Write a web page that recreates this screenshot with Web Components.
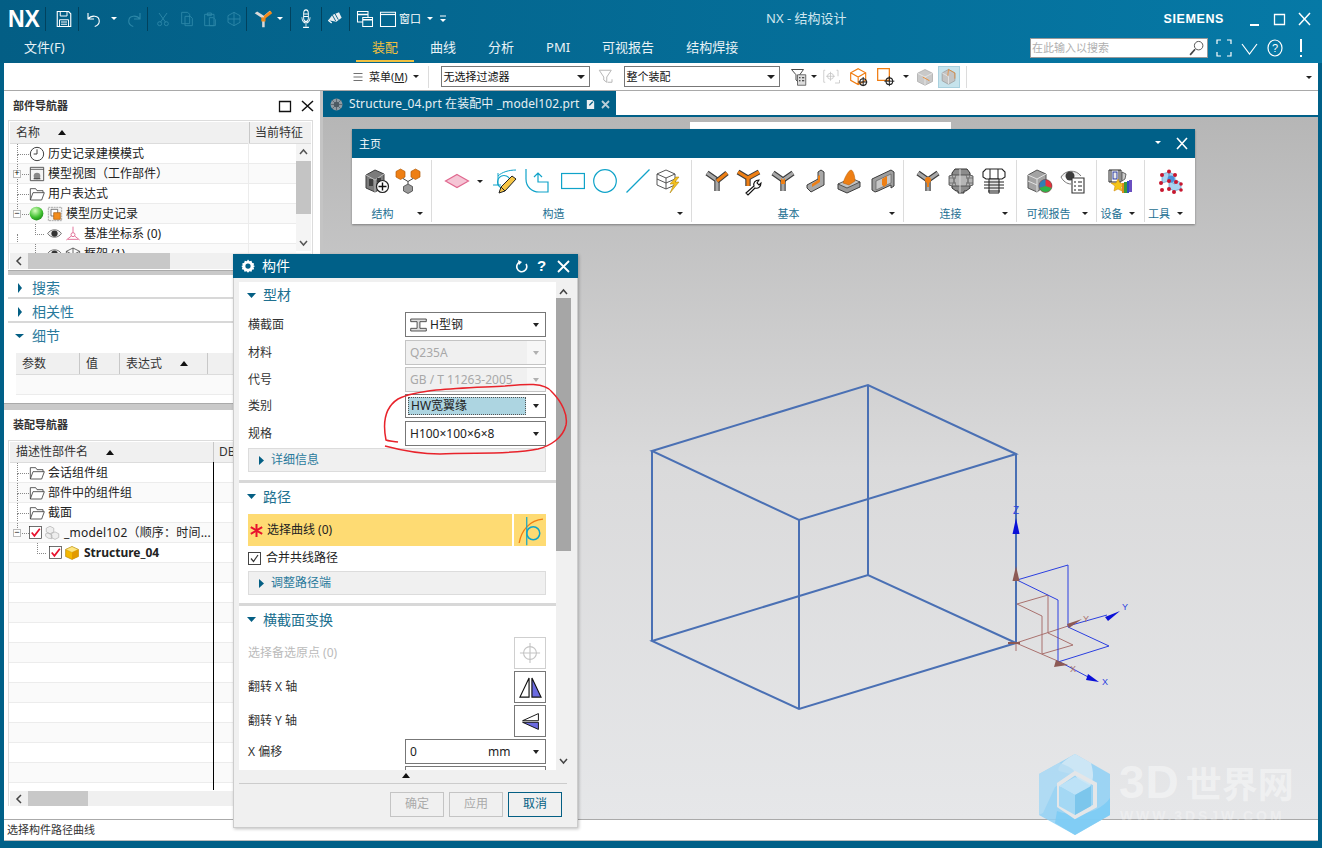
<!DOCTYPE html>
<html lang="zh">
<head>
<meta charset="utf-8">
<title>NX - 结构设计</title>
<style>
  html, body { margin: 0; padding: 0; background: #fff; }
  body { font: 12px/16px "Noto Sans", "Noto Sans CJK SC", sans-serif; color: #222; }
</style>
</head>
<body>
<nx-window></nx-window>
<script>
// steel section drawn as a dark outline with a lighter core
const beam = (d, c = "#a8a8a8") => `<path d="${d}" fill="none" stroke="#3c3c3c" stroke-width="5.400" stroke-linejoin="round"/><path d="${d}" fill="none" stroke="${c}" stroke-width="3.200" stroke-linejoin="round"/>`;

// small icon set, all drawn on a 24x24 box
const ICONS = {
  save: `<path d="M3 2h15l3 3v17H3z" fill="none" stroke="#fff" stroke-width="1.5"/><path d="M7 2v6h9V2M6 22v-9h12v9M8 16h8M8 19h8" fill="none" stroke="#fff" stroke-width="1.3"/>`,
  undo: `<path d="M4 4v8h8M4 12c4-5 15-6 15 3 0 4-3 6-6 7" fill="none" stroke="#fff" stroke-width="1.5"/>`,
  redo: `<path d="M20 4v8h-8M20 12c-4-5-15-6-15 3 0 4 3 6 6 7" fill="none" stroke="#2c87a8" stroke-width="1.5"/>`,
  cut: `<circle cx="7" cy="19" r="3" fill="none" stroke="#2c87a8" stroke-width="1.4"/><circle cx="17" cy="19" r="3" fill="none" stroke="#2c87a8" stroke-width="1.4"/><path d="M8 17L18 3M16 17L6 3" stroke="#2c87a8" stroke-width="1.4"/>`,
  copy: `<path d="M4 2h9l3 3v14H4zM9 8h8l3 3v11H9z" fill="none" stroke="#2c87a8" stroke-width="1.4"/>`,
  paste: `<path d="M4 5h14v17H4zM8 3h6v4H8zM11 10h6l3 3v9h-9z" fill="none" stroke="#2c87a8" stroke-width="1.4"/>`,
  del: `<path d="M12 2l9 5v10l-9 5-9-5V7zM3 12h18M12 2v20" fill="none" stroke="#2c87a8" stroke-width="1.4"/>`,
  yTop: `<path d="M2 5l9 6v11h3V11l8-7-2-2-7 6-8-5z" fill="#d9d9d9"/><path d="M13 8l8-6 2 3-9 7z" fill="#f08a1c"/><path d="M10 10h5v5h-5z" fill="#f08a1c"/>`,
  mic: `<rect x="8" y="1" width="8" height="14" rx="4" fill="none" stroke="#fff" stroke-width="1.5"/><path d="M8 6h8M8 9h8M5 10c0 9 14 9 14 0M12 18v3M7 22h10" fill="none" stroke="#fff" stroke-width="1.4"/>`,
  hand: `<path d="M2 14l6-8 10-4 4 8-8 6z" fill="#e8edf0"/><path d="M8 6l5 9M12 4l5 9" stroke="#045f84" stroke-width="1.4"/><path d="M2 14l5 4" stroke="#fff" stroke-width="2"/>`,
  winStack: `<path d="M2 2h14v14H2z" fill="none" stroke="#fff" stroke-width="1.4"/><path d="M2 6h14" stroke="#fff" stroke-width="2"/><path d="M9 10h13v12H9z" fill="#04688f" stroke="#fff" stroke-width="1.4"/><path d="M9 13h13" stroke="#fff" stroke-width="2"/>`,
  win: `<path d="M2 3h20v19H2z" fill="none" stroke="#fff" stroke-width="1.4"/><path d="M2 6h20" stroke="#fff" stroke-width="1.6"/>`,
  search: `<circle cx="15" cy="8" r="6" fill="#fff" stroke="#555" stroke-width="1.4"/><path d="M10 13l-7 8" stroke="#444" stroke-width="2.4"/>`,
  menu: `<path d="M3 5h18M3 12h18M3 19h18" stroke="#333" stroke-width="1.4"/>`,
  filterUndo: `<path d="M3 3h16l-6 9v7l-4-3v-4z" fill="none" stroke="#b5b5b5" stroke-width="1.3"/><path d="M14 19h6v-4" fill="none" stroke="#b5b5b5" stroke-width="1.3"/>`,
  filterList: `<path d="M2 2h16l-5 7v11l-5-4V9z" fill="#fff" stroke="#444" stroke-width="1.3"/><path d="M10 9h11v14H10z" fill="#ddd" stroke="#444"/><path d="M12 13h2M16 13h3M12 17h2M16 17h3" stroke="#222" stroke-width="1.4"/>`,
  snapGray: `<path d="M3 3H1v16h2M18 3h2v8" fill="none" stroke="#c0c0c0"/><circle cx="10" cy="11" r="4" fill="none" stroke="#c0c0c0"/><path d="M10 5v12M4 11h12M16 20h6v-4" fill="none" stroke="#c0c0c0"/>`,
  cubeTarget: `<path d="M11 2l9 5v9l-9 5-9-5V7zM2 7l9 5 9-5M11 12v9" fill="#fff" stroke="#f07d12" stroke-width="1.4"/><circle cx="17" cy="18" r="4" fill="none" stroke="#222" stroke-width="1.3"/><path d="M17 12v11M11 18h11" stroke="#222" stroke-width="1.2"/>`,
  rectTarget: `<path d="M2 2h14v14H2z" fill="#fff" stroke="#f07d12" stroke-width="1.5"/><circle cx="16" cy="17" r="4" fill="none" stroke="#222" stroke-width="1.3"/><path d="M16 11v12M10 17h12" stroke="#222" stroke-width="1.2"/>`,
  cubeA: `<path d="M12 2l10 5v11l-10 5L2 18V7z" fill="#c9c9c9" stroke="#aaa"/><path d="M2 7l10 5 10-5M12 12v11" fill="none" stroke="#eee"/><path d="M9 12l9 5" stroke="#f07d12" stroke-width="1"/>`,
  cubeB: `<path d="M12 2l9 5v11l-9 5-9-5V7z" fill="#c4c4c4" stroke="#999"/><path d="M3 7l9 5v11" fill="none" stroke="#eee"/><path d="M12 2l9 5v8" fill="none" stroke="#f07d12" stroke-width=".9"/><path d="M12 2l-1 9" stroke="#f07d12" stroke-width=".9"/>`,
  wheelAdd: `<path d="M1 6l9-5 9 4v13l-9 5-9-4z" fill="#7b7b7b" stroke="#3c3c3c"/><path d="M1 6l9 5 9-6M10 11v12" fill="none" stroke="#bdbdbd"/><rect x="4" y="10" width="4" height="7" fill="#3f3f3f"/><rect x="12" y="9" width="4" height="4" fill="#3f3f3f"/><circle cx="17.500" cy="17.500" r="6" fill="#fff" stroke="#222" stroke-width="1.200"/><path d="M17.500 13.500v8M13.500 17.500h8" stroke="#111" stroke-width="1.400"/>`,
  linkOrange: `<path d="M4.500 0L9 2.500V8L4.500 10.500 0 8V2.500z" fill="#ee7f14" stroke="#b25c08" stroke-width=".7"/><path d="M19.500 0L24 2.500V8l-4.500 2.500L15 8V2.500z" fill="#ee7f14" stroke="#b25c08" stroke-width=".7"/><path d="M12 15l4.500 2.500V22L12 24.500 7.500 22v-4.500z" fill="#9a9a9a" stroke="#444" stroke-width=".8"/><path d="M7 9.500l5 3 5-3M12 12.500V15" fill="none" stroke="#444"/>`,
  plane: `<path d="M12 5.500l11.500 6.500L12 18.500.500 12z" fill="#f5c5d5" stroke="#e0688f" stroke-width="1.200"/>`,
  sketch: `<path d="M0 16h8M5 4v12M5 7C9 3 16 1 23 1" fill="none" stroke="#10a3c9" stroke-width="1"/><circle cx="11" cy="13" r="6.500" fill="none" stroke="#10a3c9" stroke-width="1.100"/><path d="M19 7l4 3-11 12-6 2 2-6z" fill="#f6c545" stroke="#222" stroke-width="1"/><path d="M8 18l4 4" stroke="#222"/>`,
  curve: `<path d="M1 0v10c0 8 6 13 13 13h9V13h-10V4M9 8l4-4 4 4" fill="none" stroke="#10a3c9" stroke-width="1.200"/>`,
  rect: `<rect x=".600" y="4.500" width="22.800" height="15" fill="none" stroke="#10a3c9" stroke-width="1.200"/>`,
  circle: `<circle cx="12" cy="12" r="11.300" fill="none" stroke="#10a3c9" stroke-width="1.200"/>`,
  line: `<path d="M.500 23.500L23.500.500" stroke="#10a3c9" stroke-width="1.200"/>`,
  boxBolt: `<path d="M9 1l9 4v11l-9 4-9-4V5zM0 5l9 4 9-4M9 9v11M0 10l9 4 9-4" fill="none" stroke="#444" stroke-width=".900"/><path d="M19 8l-6 7h4l-4 9 9-11h-4l4-5z" fill="#f4c020" stroke="#a67c00" stroke-width=".5"/>`,
  yOrange: beam("M2 4l10 7v11") + beam("M12 12l10-8", "#ee7f14"),
  yWrench: beam("M1 3l10 6 11-6", "#ee7f14") + beam("M11 10v7", "#ee7f14") + `<path d="M9 24l8-7c-1-3 1-6 5-6l-2 3 2 2 2-2c0 4-3 6-6 5l-7 7z" fill="#fff" stroke="#111" stroke-width="1.100"/>`,
  yMid: beam("M2 4l10 7 10-7") + beam("M12 11v11") + `<path d="M10 9l2 2 2-2v6h-4z" fill="#ee7f14"/>`,
  lBracket: `<path d="M3 19v-3l11-6V3l3-2 3 2v13L7 23z" fill="#a8a8a8" stroke="#3c3c3c" stroke-width="1"/><path d="M8 15l6-4V7l2-1v7l-8 5z" fill="#ee7f14"/>`,
  gusset: `<path d="M1 15v5l9 4 13-6v-5z" fill="#9a9a9a" stroke="#3c3c3c" stroke-width="1"/><path d="M1 15l13-6 9 4-13 6z" fill="#c2c2c2" stroke="#3c3c3c" stroke-width=".8"/><path d="M6 14c2-6 5-12 8-13 2 0 4 6 4 11l-6 4z" fill="#ee7f14" stroke="#b25c08" stroke-width=".5"/>`,
  channel: `<path d="M1 10L20 1l3 2v14l-3 2v-3L7 22l-3 1-3-2z" fill="#9e9e9e" stroke="#3c3c3c" stroke-width="1"/><path d="M5 12L20 5v9L5 21z" fill="#c8c8c8" stroke="#555" stroke-width=".6"/><path d="M11 10l5-3v8l-2.500 3-2.500-2z" fill="#ee7f14"/>`,
  yBolt: beam("M2 4l10 7 10-7") + beam("M12 11v11") + `<circle cx="12" cy="11" r="3" fill="#ee7f14"/><path d="M11 13h2v5h-2z" fill="#ee7f14"/>`,
  nut: `<path d="M6 0h12l3 4v15l-4 3h-2v2H9v-2H7l-4-3V4z" fill="#8c8c8c" stroke="#333" stroke-width="1"/><path d="M0 7l3-1h18l3 1v9l-3 1H3l-3-1z" fill="#b5b5b5" stroke="#444" stroke-width=".8"/><path d="M3 6l4 11M7 6L3 17M21 6l-4 11M17 6l4 11M0 9h7M0 14h7M17 9h7M17 14h7" stroke="#555" stroke-width=".6"/><path d="M11 0v24" stroke="#d8d8d8"/>`,
  bolt: `<path d="M4 0h16l3 3v5l-3 2H4L1 8V3z" fill="#fff" stroke="#222" stroke-width="1.100"/><path d="M8 0v10M16 0v10M7 10h10v14H7z" fill="#e6e6e6" stroke="#222" stroke-width="1"/><path d="M2 13h20M2 16h20M2 19h20M6 22h12" stroke="#222" stroke-width="1.100"/>`,
  report: `<path d="M9 1l9 4v11l-9 7-9-4V6z" fill="#a3a3a3" stroke="#555"/><path d="M0 6l9 4 9-5M9 10v13M0 12l9 4" fill="none" stroke="#e2e2e2"/><circle cx="17.500" cy="17" r="6.500" fill="#e6323c" stroke="#333" stroke-width=".5"/><path d="M17.500 17V10.500a6.500 6.500 0 0 0-6 8.500z" fill="#2f7fb5"/><path d="M17.500 17l-6 2a6.500 6.500 0 0 0 12 0z" fill="#2cb34a"/>`,
  eyeList: `<path d="M0 8C4 1 15 0 20 7" fill="#eee" stroke="#777"/><path d="M0 8c2 4 6 7 10 7" fill="none" stroke="#777"/><circle cx="9" cy="7" r="4.500" fill="#3c3c3c"/><path d="M11 9h12v15H11z" fill="#fff" stroke="#333" stroke-width="1.100"/><path d="M13 13h2M17 13h4M13 17h2M17 17h4M13 21h2M17 21h4" stroke="#222" stroke-width="1.100"/>`,
  device: `<path d="M0 1h12v12H0z" fill="#fff" stroke="#222"/><path d="M2 1v12M10 1v12" stroke="#222"/><rect x="4" y="3" width="4" height="7" fill="#e8e8e8" stroke="#2a3aa0"/><path d="M13 3l4 2-1 5-3 2z" fill="#ccc" stroke="#333" stroke-width=".7"/><path d="M5 22l1-5-4-3 5 0 2-4 2 4 4 1-3 3 1 4-4-2z" fill="#f5c518" stroke="#c88000" stroke-width=".5"/><path d="M13 14h2v10h-2z" fill="#e08a1e"/><path d="M15 13h3v11h-3z" fill="#3a9c3a"/><path d="M18 12h2v12h-2z" fill="#3050c0"/><path d="M20 11h3v12h-3z" fill="#6a4fc0"/>`,
  molecule: `<path d="M4 5l7-2v9l-7 2zM11 3l6 3v9l-6-3zM11 12l7-1 5 3v6l-7 2-5-3z" fill="#a9d3ef" stroke="#5590c0" stroke-width=".6"/><circle cx="13" cy="10" r="3.500" fill="#4a90d9"/><g fill="#c8172f"><circle cx="4" cy="6" r="2"/><circle cx="11" cy="2.500" r="2"/><circle cx="17" cy="6" r="2"/><circle cx="3" cy="14" r="2"/><circle cx="11" cy="12" r="2"/><circle cx="18" cy="13" r="2"/><circle cx="23" cy="15" r="1.800"/><circle cx="4" cy="21" r="2"/><circle cx="11" cy="20" r="2"/><circle cx="16" cy="23" r="2"/><circle cx="23" cy="21" r="1.800"/></g>`,
  clock: `<circle cx="12" cy="12" r="10" fill="#fff" stroke="#333" stroke-width="1.4"/><path d="M12 5v7H7" fill="none" stroke="#333" stroke-width="1.4"/>`,
  modelView: `<path d="M2 2h20v20H2z" fill="#f4f4f4" stroke="#444" stroke-width="1.3"/><path d="M2 5h20" stroke="#444" stroke-width="1.2"/><circle cx="12" cy="15" r="5" fill="#888"/><path d="M7 19h10" stroke="#555" stroke-width="2"/>`,
  folder: `<path d="M2 21V4h8l2 3h9v3M2 21l4-11h17l-4 11z" fill="#fff" stroke="#444" stroke-width="1.3"/>`,
  ball: `<defs><radialGradient id="b" cx=".4" cy=".3" r=".8"><stop offset="0" stop-color="#d8ffc0"/><stop offset=".6" stop-color="#40c030"/><stop offset="1" stop-color="#157a15"/></radialGradient></defs><circle cx="12" cy="12" r="11" fill="url(#b)"/>`,
  history: `<path d="M2 2h20v20H2z" fill="#f2f2f2" stroke="#888" stroke-dasharray="3 1"/><path d="M6 5h10v10H6z" fill="#fff" stroke="#444"/><path d="M10 10h10v10H10z" fill="#f28c1c" stroke="#a85a08"/>`,
  eye: `<path d="M1 12c5-8 17-8 22 0-5 8-17 8-22 0z" fill="#eee" stroke="#333"/><circle cx="12" cy="12" r="5" fill="#333"/>`,
  csys: `<circle cx="12" cy="13" r="3" fill="none" stroke="#e06c94" stroke-width="1.4"/><path d="M12 1v9M9.500 15L2 21M14.500 15L22 21M4 20h16" stroke="#e06c94" stroke-width="1.4" fill="none"/>`,
  frame: `<path d="M12 3l10 5v9l-10 5-10-5V8zM2 8l10 5 10-5M12 3v19" fill="none" stroke="#444" stroke-width="1.2"/>`,
  redCheck: `<rect x="1" y="1" width="22" height="22" fill="#fff" stroke="#222" stroke-width="1.2"/><path d="M5 12l5 6L20 5" fill="none" stroke="#e8112d" stroke-width="3.2"/>`,
  parts: `<path d="M8 2l6 3v6l-6 3-6-3V5zM16 11l6 3v6l-6 3-6-3v-6zM5 13l6 3v6l-6-1-4-3v-4z" fill="#eee" stroke="#aaa"/>`,
  goldCube: `<path d="M12 1l11 5v12l-11 5-11-5V6z" fill="#f5b800" stroke="#a97d00"/><path d="M1 6l11 5 11-5-11-5z" fill="#ffe680" stroke="#a97d00" stroke-width=".6"/><path d="M12 11v12l11-5V6z" fill="#e29a00"/>`,
  gear: `<path d="M12 1l2.500 3 3.500-1 1 3.500 3.500 1-1 3.500 2.500 1-2.500 2 1 3.500-3.500 1-1 3.500-3.500-1-2.500 2.500-2.500-2.500-3.500 1-1-3.500-3.500-1 1-3.500L.500 12l2.500-1-1-3.500 3.500-1 1-3.500 3.500 1z" fill="#fff"/><circle cx="12" cy="12" r="4.500" fill="#006088"/>`,
  hbeam: `<path d="M1 3h22v4h-9v10h9v4H1v-4h9V7H1z" fill="#ddd" stroke="#333" stroke-width="1.2"/>`,
  curveOrange: `<path d="M2 24C4 12 12 3 24 2" fill="none" stroke="#f07d12" stroke-width="1.2"/><path d="M9 0v26" stroke="#10a3c9" stroke-width="1.1"/><circle cx="15" cy="15" r="6" fill="none" stroke="#10a3c9" stroke-width="1.4"/>`,
  point: `<circle cx="12" cy="12" r="7" fill="none" stroke="#c4c4c4" stroke-width="1.2"/><path d="M12 1v22M1 12h22" stroke="#c4c4c4" stroke-width="1.2"/>`,
  flipX: `<path d="M10.500 2v20H1z" fill="#fff" stroke="#111" stroke-width="1.2"/><path d="M13.500 2v20H23z" fill="#6b6be0" stroke="#111" stroke-width="1.2"/>`,
  flipY: `<path d="M22 2v9H2z" fill="#fff" stroke="#111" stroke-width="1.2"/><path d="M22 22v-9H2z" fill="#6b6be0" stroke="#111" stroke-width="1.2"/>`,
  tabPart: `<circle cx="12" cy="12" r="11" fill="#8f9ba3"/><circle cx="12" cy="12" r="5" fill="#4c5a63"/><path d="M12 1v22M1 12h22M4 4l16 16M20 4L4 20" stroke="#4c5a63" stroke-width="1.4"/>`,
  tabDoc: `<path d="M4 2h12l4 4v16H4z" fill="#e8eef2"/><path d="M9 12l7-7 2 2-7 7H9z" fill="#045f84"/>`
};

class NxIcon extends HTMLElement {
  connectedCallback() {
    const size = this.getAttribute("size") || 24;
    const w = this.getAttribute("w") || size;
    this.attachShadow({mode: "open"}).innerHTML = `
<style>:host{display:inline-flex;flex:none;width:${w}px;height:${size}px} svg{display:block;overflow:visible}</style>
<svg width="${w}" height="${size}" viewBox="0 0 24 24" preserveAspectRatio="none">${ICONS[this.getAttribute("name")] || ""}</svg>`;
  }
}
customElements.define("nx-icon", NxIcon);

// tiny dropdown triangle, black on the light bars and white on the teal ones
class NxCaret extends HTMLElement {
  connectedCallback() {
    const c = this.getAttribute("color") || "#222";
    const s = this.getAttribute("s") || 3;
    this.attachShadow({mode: "open"}).innerHTML = `
<style>:host{display:inline-block;flex:none;width:0;height:0;border-left:${s}px solid transparent;border-right:${s}px solid transparent;border-top:${s}px solid ${c}}</style>`;
  }
}
customElements.define("nx-caret", NxCaret);

class NxTitlebar extends HTMLElement {
  connectedCallback() {
    this.attachShadow({mode: "open"}).innerHTML = `
<style>
:host{display:block;height:63px;background:linear-gradient(90deg,#035e85,#0679a6);color:#fff;box-sizing:border-box}
.top{height:32px;display:flex;align-items:center;position:relative;box-sizing:border-box;padding-top:5px}
.logo{font:bold 23px/24px "Liberation Sans",sans-serif;width:37px;margin-left:8px;letter-spacing:0}
.sep{width:1px;height:24px;background:#01425e;flex:none}
.title{position:absolute;left:766px;top:10px;font-size:13px;line-height:17px;color:#cfe6ef}
.right{margin-left:auto;display:flex;align-items:center;height:27px}
.siemens{font:bold 12.500px/14px "Liberation Sans",sans-serif;letter-spacing:.6px;margin-right:24px}
.wbtn{width:13px;height:14px;position:relative;margin-right:12px}
.bottom{height:31px;display:flex;position:relative;line-height:30px}
.file{margin-left:24px;color:#e8f2f6;font-size:13px}
.tabs{position:absolute;left:356px;top:0;display:flex;gap:32px;font-size:13px;color:#e8f2f6}
.tabs span{display:block;box-sizing:border-box;height:30px;white-space:nowrap}
.tabs .on{color:#f0c040;border-bottom:2px solid #f0c040;width:58px;padding-left:16px;margin-right:-16px}
.search{position:absolute;left:1030px;top:6px;width:178px;height:20px;box-sizing:border-box;background:#fff;border:1px solid #999;font-size:11px;line-height:18px;color:#b0b0b0;padding-left:1px}
.search nx-icon{position:absolute;right:2px;top:1px}
.tools{position:absolute;left:1216px;top:6px;display:flex;align-items:center;gap:9px}
</style>
<div class="top">
  <div class="logo">NX</div>
  <div class="sep"></div>
  <nx-icon name="save" size="18" style="margin-left:9px"></nx-icon>
  <div class="sep" style="margin-left:5px"></div>
  <nx-icon name="undo" size="18" style="margin-left:6px"></nx-icon>
  <nx-caret color="#fff" style="margin-left:8px"></nx-caret>
  <nx-icon name="redo" size="18" style="margin-left:8px"></nx-icon>
  <div class="sep" style="margin-left:4px"></div>
  <nx-icon name="cut" size="16" style="margin-left:7px"></nx-icon>
  <nx-icon name="copy" size="16" style="margin-left:8px"></nx-icon>
  <nx-icon name="paste" size="16" style="margin-left:7px"></nx-icon>
  <nx-icon name="del" size="16" style="margin-left:8px"></nx-icon>
  <div class="sep" style="margin-left:4px"></div>
  <nx-icon name="yTop" size="20" style="margin-left:6px"></nx-icon>
  <nx-caret color="#fff" style="margin-left:4px"></nx-caret>
  <div class="sep" style="margin-left:7px"></div>
  <nx-icon name="mic" size="20" w="14" style="margin-left:8px"></nx-icon>
  <div class="sep" style="margin-left:8px"></div>
  <nx-icon name="hand" size="16" style="margin-left:5px"></nx-icon>
  <div class="sep" style="margin-left:6px"></div>
  <nx-icon name="winStack" size="18" style="margin-left:6px"></nx-icon>
  <nx-icon name="win" size="18" style="margin-left:5px"></nx-icon>
  <span style="margin-left:2px;font-size:11px;line-height:16px">窗口</span>
  <nx-caret color="#fff" style="margin-left:6px"></nx-caret>
  <svg width="8" height="8" style="margin-left:6px"><path d="M1 1h6" stroke="#fff"/><path d="M1 4h6L4 7z" fill="#fff"/></svg>
  <div class="right">
    <div class="siemens">SIEMENS</div>
    <div class="wbtn"><svg width="13" height="14"><path d="M2 13h9" stroke="#fff" stroke-width="2"/></svg></div>
    <div class="wbtn"><svg width="13" height="14"><path d="M1.500 2.500h10v10h-10z" fill="none" stroke="#fff" stroke-width="1.300"/></svg></div>
    <div class="wbtn" style="margin-right:11px"><svg width="13" height="14"><path d="M1 1l11 12M12 1L1 13" stroke="#fff" stroke-width="1.500"/></svg></div>
  </div>
  <div class="title">NX - 结构设计</div>
</div>
<div class="bottom">
  <span class="file">文件(F)</span>
  <div class="tabs">
    <span class="on">装配</span>
    <span>曲线</span>
    <span>分析</span>
    <span>PMI</span>
    <span>可视报告</span>
    <span>结构焊接</span>
  </div>
  <div class="search">在此输入以搜索<nx-icon name="search" size="17"></nx-icon></div>
  <div class="tools">
    <svg width="16" height="18"><path d="M1 5V1h4M11 1h4v4M15 13v4h-4M5 17H1v-4" fill="none" stroke="#fff" stroke-width="1.200"/></svg>
    <svg width="17" height="18"><path d="M1 5l7.500 10L16 5" fill="none" stroke="#fff" stroke-width="1.200"/></svg>
    <svg width="16" height="18"><ellipse cx="8" cy="9" rx="7" ry="8" fill="none" stroke="#fff" stroke-width="1.200"/><text x="8" y="13" text-anchor="middle" fill="#fff" font-size="11" font-family="Liberation Sans">?</text></svg>
    <svg width="8" height="20" style="margin-left:5px"><path d="M4 1v13" stroke="#fff" stroke-width="2"/><path d="M4 17v2" stroke="#fff" stroke-width="2"/></svg>
  </div>
</div>`;
  }
}
customElements.define("nx-titlebar", NxTitlebar);

class NxCombo extends HTMLElement {
  connectedCallback() {
    const w = this.getAttribute("w");
    this.attachShadow({mode: "open"}).innerHTML = `
<style>
:host{display:flex;align-items:center;box-sizing:border-box;width:${w}px;height:21px;border:1px solid #777;background:#fff;padding:0 4px 0 2px;font-size:11px;line-height:16px;color:#111;flex:none}
nx-caret{margin-left:auto}
</style><slot></slot><nx-caret s="4"></nx-caret>`;
  }
}
customElements.define("nx-combo", NxCombo);

class NxToolbar extends HTMLElement {
  connectedCallback() {
    this.attachShadow({mode: "open"}).innerHTML = `
<style>
:host{display:flex;align-items:center;height:28px;box-sizing:border-box;background:#fff;border-bottom:1px solid #a9a9a9;padding-left:348px;position:relative}
.txt{font-size:11px;line-height:14px;margin-left:5px;color:#222}
.sep{width:1px;height:22px;background:#dcdcdc;flex:none}
.on{display:inline-flex;background:#c6e3ec;border:1px solid #a8d0de;padding:2px;box-sizing:border-box;margin-left:4px;width:22px;height:22px;align-items:center;justify-content:center}
.end{position:absolute;right:6px;top:13px}
</style>
<nx-icon name="menu" size="12" w="12"></nx-icon>
<span class="txt">菜单(<u>M</u>)</span>
<nx-caret style="margin-left:5px"></nx-caret>
<div class="sep" style="margin-left:9px"></div>
<nx-combo w="149" style="margin-left:12px">无选择过滤器</nx-combo>
<nx-icon name="filterUndo" size="18" style="margin-left:7px"></nx-icon>
<nx-combo w="156" style="margin-left:9px">整个装配</nx-combo>
<nx-icon name="filterList" size="18" style="margin-left:10px"></nx-icon>
<nx-caret style="margin-left:3px"></nx-caret>
<nx-icon name="snapGray" size="18" style="margin-left:6px"></nx-icon>
<nx-icon name="cubeTarget" size="20" style="margin-left:8px"></nx-icon>
<nx-icon name="rectTarget" size="20" style="margin-left:7px"></nx-icon>
<nx-caret style="margin-left:7px"></nx-caret>
<nx-icon name="cubeA" size="18" style="margin-left:7px"></nx-icon>
<span class="on"><nx-icon name="cubeB" size="17"></nx-icon></span>
<div class="sep" style="margin-left:6px"></div>
<nx-caret class="end"></nx-caret>`;
  }
}
customElements.define("nx-toolbar", NxToolbar);

// one row of a navigator tree: indent attr moves the connector and the content
class NxRow extends HTMLElement {
  connectedCallback() {
    const i = +(this.getAttribute("indent") || 0);
    const sign = this.getAttribute("sign");
    const stem = this.hasAttribute("stem");
    this.attachShadow({mode: "open"}).innerHTML = `
<style>
:host{display:flex;align-items:center;height:20px;box-sizing:border-box;border-bottom:1px solid #ececec;position:relative;font-size:12px;line-height:16px;color:#222;white-space:nowrap;overflow:hidden;gap:3px;padding-left:${20 + i}px}
:host(:nth-child(even)){background:#fafafa}
.dot{position:absolute;left:${i ? i + 8 : 8}px;top:0;height:10px;width:${i ? 8 : 11}px;border-left:1px dotted #888;border-bottom:1px dotted #888}
.stem{position:absolute;left:8px;top:10px;height:10px;border-left:1px dotted #888}
.sign{position:absolute;left:4px;top:6px;width:8px;height:8px;box-sizing:border-box;border:1px solid #bbb;background:#fff;font:9px/6px "Liberation Mono",monospace;text-align:center;color:#000}
</style>
<span class="dot"></span>${stem ? '<span class="stem"></span>' : ""}
${sign ? `<span class="sign">${sign}</span>` : ""}
<slot></slot>`;
  }
}
customElements.define("nx-row", NxRow);

class NxScrollH extends HTMLElement {
  connectedCallback() {
    const w = this.getAttribute("thumb");
    this.attachShadow({mode: "open"}).innerHTML = `
<style>
:host{display:flex;height:16px;background:#f0f0f0;align-items:stretch;flex:none}
.a{width:18px;display:flex;align-items:center;justify-content:center}
.t{width:${w}px;background:#c8c8c8}
</style>
<div class="a"><svg width="8" height="10"><path d="M6 1L2 5l4 4" fill="none" stroke="#444" stroke-width="1.500"/></svg></div><div class="t"></div>`;
  }
}
customElements.define("nx-scroll-h", NxScrollH);

class NxAccordion extends HTMLElement {
  connectedCallback() {
    const open = this.hasAttribute("open");
    this.attachShadow({mode: "open"}).innerHTML = `
<style>
:host{display:flex;align-items:center;height:22px;gap:7px;font-size:14px;line-height:18px;color:#2a7a9c;padding-left:11px;box-sizing:border-box;flex:none}
svg{flex:none;width:10px;height:10px}
</style>
<svg viewBox="0 0 10 10">${open ? '<path d="M0 3h9L4.500 7z" fill="#045f84"/>' : '<path d="M3 0v10l4-5z" fill="#045f84"/>'}</svg><slot></slot>`;
  }
}
customElements.define("nx-accordion", NxAccordion);

class NxLeftPanel extends HTMLElement {
  connectedCallback() {
    this.attachShadow({mode: "open"}).innerHTML = `
<style>
:host{display:flex;flex-direction:column;width:316px;flex:none;background:#fff;box-sizing:border-box;overflow:hidden;font-size:12px}
.head{height:29px;display:flex;align-items:center;padding-left:9px;font-size:11px;font-weight:700;color:#333;flex:none}
.head svg{margin-left:auto;margin-right:8px}
.frame{margin:0 7px 0 4px;border:1px solid #dcdcdc;border-bottom:0;position:relative;overflow:hidden;flex:none;box-sizing:border-box}
.th{display:flex;height:21px;background:#f0f0f0;border-bottom:1px solid #dcdcdc;line-height:20px;color:#333;margin:1px 1px 0}
.th span{display:flex;align-items:center;padding-left:6px;box-sizing:border-box;border-right:1px solid #c8c8c8;height:21px}
.tri{width:0;height:0;border-left:4px solid transparent;border-right:4px solid transparent;border-bottom:5px solid #111;margin-left:18px}
.tree{position:relative;overflow:hidden}
.vs{position:absolute;right:1px;top:23px;width:15px;height:107px;background:#f4f4f4}
.vs i{position:absolute;left:0;top:17px;width:15px;height:53px;background:#c4c4c4}
.vs svg{position:absolute;left:3px}
.split{height:5px;background:#c9c9c9;border-top:1px solid #aaa;box-sizing:border-box;flex:none}
.bar{height:2px;background:#d8d8d8;flex:none}
.cols{position:absolute;top:22px;bottom:0;left:239px;width:1px;background:#ececec}
.black{position:absolute;left:204px;top:21px;bottom:16px;width:1px;background:#000}
.rowbg{height:20px;border-bottom:1px solid #ececec;box-sizing:border-box}
.rowbg:nth-child(even){background:#fafafa}
</style>
<div class="head">部件导航器
  <svg width="36" height="14" style="margin-right:6px"><path d="M1.500 2.500h11v10h-11z" fill="none" stroke="#111" stroke-width="1.300"/><path d="M24 2l11 10M35 2L24 12" stroke="#111" stroke-width="1.500"/></svg>
</div>
<div class="frame" style="height:149px">
  <div class="th"><span style="width:240px">名称<i class="tri"></i></span><span style="padding-left:5px;border:0">当前特征</span></div>
  <div class="tree" style="height:109px;margin-right:16px">
    <nx-row stem><nx-icon name="clock" size="16"></nx-icon>历史记录建模模式</nx-row>
    <nx-row stem sign="+"><nx-icon name="modelView" size="16"></nx-icon>模型视图（工作部件）</nx-row>
    <nx-row stem><nx-icon name="folder" size="16"></nx-icon>用户表达式</nx-row>
    <nx-row sign="−"><nx-icon name="ball" size="15"></nx-icon><nx-icon name="history" size="16"></nx-icon>模型历史记录</nx-row>
    <nx-row indent="18" stem><nx-icon name="eye" size="15"></nx-icon><nx-icon name="csys" size="16"></nx-icon>基准坐标系 (0)</nx-row>
    <nx-row indent="18"><nx-icon name="eye" size="15"></nx-icon><nx-icon name="frame" size="16"></nx-icon>框架 (1)</nx-row>
  </div>
  <div class="cols"></div>
  <nx-scroll-h thumb="142" style="margin:0 1px"></nx-scroll-h>
  <div class="vs"><svg width="9" height="8" style="top:4px"><path d="M1 6l3.500-4L8 6" fill="none" stroke="#555" stroke-width="1.500"/></svg><i></i><svg width="9" height="8" style="top:95px"><path d="M1 2l3.500 4L8 2" fill="none" stroke="#555" stroke-width="1.500"/></svg></div>
</div>
<div class="split" style="margin:1px 3px 0 4px;height:5px"></div>
<nx-accordion style="padding-top:4px">搜索</nx-accordion>
<div class="bar" style="margin:0 3px 0 4px"></div>
<nx-accordion style="padding-top:4px">相关性</nx-accordion>
<div class="bar" style="margin:0 3px 0 4px"></div>
<nx-accordion open style="height:26px">细节</nx-accordion>
<div class="frame" style="height:49px;margin:0 3px 0 12px;border:0">
  <div class="th" style="margin:4px 0 0"><span style="width:64px">参数</span><span style="width:40px">值</span><span style="width:88px">表达式<i class="tri" style="margin-left:18px"></i></span></div>
  <div class="rowbg"></div><div class="rowbg"></div>
</div>
<div class="split" style="margin-top:5px;height:7px"></div>
<div class="head" style="height:30px">装配导航器</div>
<div class="frame" style="height:366px">
  <div class="th" style="height:20px"><span style="width:204px;height:20px">描述性部件名<i class="tri"></i></span><span style="padding-left:5px;border:0;height:20px">DB</span></div>
  <div class="tree" style="height:328px">
    <nx-row stem><nx-icon name="folder" size="16"></nx-icon>会话组件组</nx-row>
    <nx-row stem><nx-icon name="folder" size="16"></nx-icon>部件中的组件组</nx-row>
    <nx-row stem><nx-icon name="folder" size="16"></nx-icon>截面</nx-row>
    <nx-row sign="−"><nx-icon name="redCheck" size="13"></nx-icon><nx-icon name="parts" size="15"></nx-icon><span style="margin-left:1px;letter-spacing:.2px">_model102（顺序：时间...</span></nx-row>
    <nx-row indent="20"><nx-icon name="redCheck" size="13"></nx-icon><nx-icon name="goldCube" size="14"></nx-icon><b style="margin-left:2px">Structure_04</b></nx-row>
    <div class="rowbg"></div><div class="rowbg"></div><div class="rowbg"></div><div class="rowbg"></div><div class="rowbg"></div><div class="rowbg"></div><div class="rowbg"></div><div class="rowbg"></div><div class="rowbg"></div><div class="rowbg"></div><div class="rowbg"></div><div class="rowbg"></div>
  </div>
  <div class="black"></div>
  <nx-scroll-h thumb="60" style="margin:0 1px"></nx-scroll-h>
</div>`;
  }
}
customElements.define("nx-left-panel", NxLeftPanel);

class NxRibbonGroup extends HTMLElement {
  connectedCallback() {
    const last = this.hasAttribute("last");
    this.attachShadow({mode: "open"}).innerHTML = `
<style>
:host{display:flex;flex-direction:column;box-sizing:border-box;height:62px;${last ? "" : "border-right:1px solid #dcdcdc;"}flex:none;width:${this.getAttribute("w")}px;margin-top:2px}
.icons{height:43px;display:flex;align-items:center;box-sizing:border-box;padding-left:${this.getAttribute("pad") || 0}px;padding-bottom:1px}
.foot{height:19px;display:flex;align-items:center;position:relative;justify-content:center;color:#1d6f92;font-size:11px;line-height:14px;padding:2px ${this.getAttribute("lr") || 0}px 0 0;box-sizing:border-box}
nx-caret{position:absolute;right:${this.getAttribute("cr") || 9}px;top:9px}
</style>
<div class="icons"><slot></slot></div>
<div class="foot">${this.getAttribute("label")}<nx-caret></nx-caret></div>`;
  }
}
customElements.define("nx-ribbon-group", NxRibbonGroup);

class NxRibbonPanel extends HTMLElement {
  connectedCallback() {
    this.attachShadow({mode: "open"}).innerHTML = `
<style>
:host{display:block;position:absolute;left:29px;top:12px;width:843px;height:95px;background:#fff;box-shadow:0 1px 2px rgba(0,0,0,.35)}
.h{height:29px;background:#006088;color:#fff;display:flex;align-items:center;padding-left:7px;font-size:11px;position:relative}
.h svg{position:absolute;right:7px;top:8px}
.h nx-caret{position:absolute;right:34px;top:12px}
.b{display:flex;height:66px}
</style>
<div class="h">主页<nx-caret color="#fff"></nx-caret><svg width="12" height="13"><path d="M1 1l10 11M11 1L1 12" stroke="#fff" stroke-width="1.600"/></svg></div>
<div class="b"><slot></slot></div>`;
  }
}
customElements.define("nx-ribbon-panel", NxRibbonPanel);

class NxSelect extends HTMLElement {
  connectedCallback() {
    const off = this.hasAttribute("disabled");
    const focus = this.hasAttribute("focus");
    const h = this.getAttribute("h") || 25;
    this.attachShadow({mode: "open"}).innerHTML = `
<style>
:host{display:flex;align-items:center;box-sizing:border-box;width:141px;height:${h}px;border:1px solid ${off ? "#c4c4c4" : "#777"};background:${off ? "#f0f0f0" : "#fff"};position:relative;font-size:12px;line-height:16px;color:${off ? "#a8a8a8" : "#222"};padding-left:4px;flex:none}
.f{display:flex;align-items:center;height:${h - 6}px;width:118px;margin-left:-2px;padding-left:2px;box-sizing:border-box;${focus ? "background:#add5e1;border:1px dotted #555;" : ""}gap:3px;white-space:nowrap;overflow:hidden}
.c{position:absolute;right:0;top:0;bottom:0;width:18px;background:${off ? "#f7f7f7" : "transparent"}}
.c i{position:absolute;right:6px;top:${(h - 2) / 2 - 2}px;width:0;height:0;border-left:3.500px solid transparent;border-right:3.500px solid transparent;border-top:4px solid ${off ? "#b0b0b0" : "#222"}}
</style>
<div class="f"><slot></slot></div><div class="c"><i></i></div>`;
  }
}
customElements.define("nx-select", NxSelect);

class NxField extends HTMLElement {
  connectedCallback() {
    const m = this.getAttribute("mt") || 3;
    this.attachShadow({mode: "open"}).innerHTML = `
<style>
:host{display:flex;align-items:center;justify-content:space-between;margin:${m}px 10px 0 9px;font-size:12px;line-height:16px;color:#333}
</style><span>${this.getAttribute("label")}</span><slot></slot>`;
  }
}
customElements.define("nx-field", NxField);

class NxSectionHead extends HTMLElement {
  connectedCallback() {
    this.attachShadow({mode: "open"}).innerHTML = `
<style>
:host{display:flex;align-items:center;height:30px;padding:0 0 4px 8px;gap:7px;font-size:14px;line-height:18px;color:#20708f;box-sizing:border-box}
svg{width:9px;height:9px;flex:none}
</style><svg viewBox="0 0 9 9"><path d="M0 2h9L4.500 7z" fill="#045f84"/></svg><slot></slot>`;
  }
}
customElements.define("nx-section-head", NxSectionHead);

class NxMore extends HTMLElement {
  connectedCallback() {
    this.attachShadow({mode: "open"}).innerHTML = `
<style>
:host{display:flex;align-items:center;box-sizing:border-box;height:24px;margin:2px 10px 0 9px;background:#f0f0f0;border:1px solid #dcdcdc;color:#2a7a9c;font-size:12px;line-height:16px;padding-left:9px;gap:6px}
svg{width:7px;height:9px}
</style><svg viewBox="0 0 7 9"><path d="M1 0v9l5-4.500z" fill="#045f84"/></svg><slot></slot>`;
  }
}
customElements.define("nx-more", NxMore);

class NxSquare extends HTMLElement {
  connectedCallback() {
    const off = this.hasAttribute("disabled");
    this.attachShadow({mode: "open"}).innerHTML = `
<style>
:host{display:flex;align-items:center;justify-content:center;box-sizing:border-box;width:32px;height:32px;border:1px solid ${off ? "#cfcfcf" : "#777"};background:#fff;flex:none}
</style><slot></slot>`;
  }
}
customElements.define("nx-square", NxSquare);

class NxDialog extends HTMLElement {
  connectedCallback() {
    this.attachShadow({mode: "open"}).innerHTML = `
<style>
:host{display:block;position:absolute;left:233px;top:254px;width:345px;height:574px;box-sizing:border-box;background:#f0f0f0;border:1px solid #ccc;border-top:0;box-shadow:1px 1px 3px rgba(0,0,0,.25);font-size:12px}
.h{height:24px;background:#006088;color:#fff;display:flex;align-items:center;font-size:14px;line-height:18px;margin:0 -1px;padding-left:8px;gap:7px;position:relative}
.h .r{position:absolute;right:8px;top:4px;display:flex;gap:9px;align-items:center}
.body{position:absolute;left:5px;top:28px;width:317px;height:488px;background:#fff;overflow:hidden}
.sep{height:3px;background:#d8d8d8;width:317px}
.scroll{position:absolute;left:322px;top:28px;width:16px;height:488px}
.scroll i{position:absolute;left:0;top:16px;width:15px;height:253px;background:#a6a6a6}
.scroll svg{position:absolute;left:3px}
.req{display:flex;margin:0 10px 0 9px;gap:2px;height:32px}
.yel{flex:1;background:#fedb73;display:flex;align-items:center;padding-left:2px;gap:4px;color:#222;font-size:12px;line-height:16px}
.yb{width:32px;background:#fedb73;display:flex;align-items:center;justify-content:center}
.ck{display:flex;align-items:center;gap:5px;height:22px;margin:1px 9px 0;color:#222;line-height:16px}
.ck i{display:flex;width:13px;height:13px;box-sizing:border-box;border:1px solid #444;background:#fff;font-style:normal}
.foot{position:absolute;left:5px;right:5px;top:516px;height:58px}
.up{position:absolute;left:163px;top:3px;width:0;height:0;border-left:4.500px solid transparent;border-right:4.500px solid transparent;border-bottom:5px solid #111}
.ln{position:absolute;left:0;right:5px;top:13px;height:1px;background:#ccc}
.btns{position:absolute;left:151px;top:22px;display:flex;gap:5px}
.btns span{display:block;box-sizing:border-box;width:54px;height:25px;border:1px solid #c4c4c4;color:#aaa;text-align:center;line-height:22px;font-size:12px}
.btns .go{border:1px solid #045f84;color:#045f84}
</style>
<div class="h"><nx-icon name="gear" size="14"></nx-icon><span>构件</span>
  <div class="r">
    <svg width="13" height="13"><path d="M5 2a5 5 0 1 0 6 2" fill="none" stroke="#fff" stroke-width="1.600"/><path d="M3 0l4 2-3 3z" fill="#fff"/></svg>
    <span style="font:bold 15px/16px 'Liberation Sans',sans-serif;width:9px">?</span>
    <svg width="13" height="13" style="margin-left:2px"><path d="M1 1l11 11M12 1L1 12" stroke="#fff" stroke-width="1.800"/></svg>
  </div>
</div>
<div class="body">
  <nx-section-head>型材</nx-section-head>
  <nx-field label="横截面" mt="0"><nx-select><nx-icon name="hbeam" size="16" w="17"></nx-icon>H型钢</nx-select></nx-field>
  <nx-field label="材料"><nx-select disabled>Q235A</nx-select></nx-field>
  <nx-field label="代号" mt="2"><nx-select disabled>GB / T 11263-2005</nx-select></nx-field>
  <nx-field label="类别" mt="2"><nx-select focus h="24">HW宽翼缘</nx-select></nx-field>
  <nx-field label="规格"><nx-select h="25">H100×100×6×8</nx-select></nx-field>
  <nx-more>详细信息</nx-more>
  <div style="height:8px"></div><div class="sep"></div>
  <nx-section-head style="height:31px">路径</nx-section-head>
  <div class="req"><div class="yel"><svg width="13" height="13"><path d="M6.500 0v13M.8 3.200l11.400 6.600M12.200 3.200L.8 9.800" stroke="#e8112d" stroke-width="2"/></svg>选择曲线 (0)</div><div class="yb"><nx-icon name="curveOrange" size="26" w="26"></nx-icon></div></div>
  <div class="ck"><i><svg width="11" height="11"><path d="M2 5.500l2.500 3L9 2" fill="none" stroke="#333" stroke-width="1.200"/></svg></i>合并共线路径</div>
  <nx-more>调整路径端</nx-more>
  <div style="height:8px"></div><div class="sep"></div>
  <nx-section-head style="height:31px">横截面变换</nx-section-head>
  <nx-field label="选择备选原点 (0)" mt="0" style="color:#bbb"><nx-square disabled><nx-icon name="point" size="22"></nx-icon></nx-square></nx-field>
  <nx-field label="翻转 X 轴" mt="2"><nx-square><nx-icon name="flipX" size="23"></nx-icon></nx-square></nx-field>
  <nx-field label="翻转 Y 轴" mt="2"><nx-square><nx-icon name="flipY" size="19"></nx-icon></nx-square></nx-field>
  <nx-field label="X 偏移" mt="2"><nx-select><span style="width:73px">0</span><span style="margin-left:2px">mm</span></nx-select></nx-field>
  <nx-field label="" mt="2"><nx-select>&nbsp;</nx-select></nx-field>
</div>
<div class="scroll">
  <svg width="9" height="8" style="top:6px"><path d="M1 6l3.500-4L8 6" fill="none" stroke="#444" stroke-width="1.500"/></svg>
  <i></i>
  <svg width="9" height="8" style="top:475px"><path d="M1 2l3.500 4L8 2" fill="none" stroke="#444" stroke-width="1.500"/></svg>
</div>
<div class="foot"><div class="up"></div><div class="ln"></div>
  <div class="btns"><span>确定</span><span>应用</span><span class="go">取消</span></div>
</div>`;
  }
}
customElements.define("nx-dialog", NxDialog);

// the free canvas: wireframe box and datum triad, drawn at their place in the view
class NxViewport extends HTMLElement {
  connectedCallback() {
    this.attachShadow({mode: "open"}).innerHTML = `
<style>
:host{display:block;flex:1;position:relative;overflow:hidden;background:linear-gradient(180deg,#b6b6b6 0,#dadadb 50%,#e6e7e9 100%)}
svg{position:absolute;left:-323px;top:-117px}
.scrap{position:absolute;left:367px;top:5px;width:261px;height:12px;background:#fff}
text{font-family:"Liberation Sans",sans-serif}
</style>
<div class="scrap"></div>
<svg width="1322" height="848">
  <g fill="none" stroke="#4a70b4" stroke-width="2">
    <path d="M652 451L868 385 1016 454 799 520z"/>
    <path d="M652 641L868 575 1016 643 799 709z"/>
    <path d="M652 451V641M868 385V575M1016 454V643M799 520V709"/>
  </g>
  <g fill="none" stroke="#a9716e" stroke-width="1">
    <path d="M1017 604L1048 595V633L1073 645 1042 654V616L1017 604"/>
    <path d="M1016 643L1068 626M1016 643L1060 662"/>
    <path d="M1016 643v8"/>
  </g>
  <g fill="none" stroke="#2b3fe0" stroke-width="1">
    <path d="M1017 580L1068 565V627L1109 646 1058 662V600L1017 580"/>
    <path d="M1068 626L1107 615M1060 662L1090 678"/>
  </g>
  <g fill="#0a10d8">
    <path d="M1016 518l-3.500 16h7z"/>
    <path d="M1105 617l15-6-12 10z"/>
    <path d="M1088 674l11 8-13-2z"/>
  </g>
  <g fill="#8d5a55">
    <path d="M1016 566l-3.500 15h7z"/>
    <path d="M1067 624l15-5-13 9z"/>
    <path d="M1056 660l12 5-14 2z"/>
    <path d="M1008 642h12v2h-12z"/>
  </g>
  <g font-size="9">
    <text x="1013" y="514" fill="#2b3fe0" font-size="10">Z</text>
    <text x="1122" y="610" fill="#2b3fe0">Y</text>
    <text x="1102" y="685" fill="#2b3fe0">X</text>
    <text x="1083" y="622" fill="#a9716e">Y</text>
    <text x="1070" y="672" fill="#a9716e">X</text>
  </g>
</svg>
<slot></slot>`;
  }
}
customElements.define("nx-viewport", NxViewport);

class NxTabStrip extends HTMLElement {
  connectedCallback() {
    this.attachShadow({mode: "open"}).innerHTML = `
<style>
:host{display:block;height:26px;flex:none;background:#fff;position:relative;box-sizing:border-box;border-bottom:2px solid #006088}
.t{display:flex;align-items:center;height:26px;width:293px;box-sizing:border-box;background:#006088;color:#e6eff3;font-size:12px;line-height:16px;padding-left:7px;gap:6px;white-space:nowrap;letter-spacing:.1px}
</style>
<div class="t"><nx-icon name="tabPart" size="13"></nx-icon>Structure_04.prt 在装配中 _model102.prt<nx-icon name="tabDoc" size="11" style="margin-left:-1px"></nx-icon><svg width="9" height="9" style="margin-left:-1px"><path d="M1 1l7 7M8 1L1 8" stroke="#b9cdd7" stroke-width="1.800"/></svg></div>`;
  }
}
customElements.define("nx-tab-strip", NxTabStrip);

// watermark lies over the view and the status bar
class NxWatermark extends HTMLElement {
  connectedCallback() {
    this.attachShadow({mode: "open"}).innerHTML = `
<style>
:host{display:block;position:absolute;left:1039px;top:753px;width:270px;height:84px;pointer-events:none}
svg{position:absolute;left:0;top:0}
.big{position:absolute;left:80px;top:7px;display:flex;align-items:baseline;color:rgba(255,255,255,.42);white-space:nowrap;font-weight:700;line-height:44px}
.big b{font:bold 46px/44px "Liberation Sans",sans-serif;letter-spacing:1px;margin-right:6px}
.big span{font:bold 36px/44px "Noto Sans CJK SC",sans-serif}
.small{position:absolute;left:81px;top:55px;font:bold 14px/16px "Liberation Sans",sans-serif;color:rgba(255,255,255,.3);letter-spacing:2.900px;white-space:nowrap}
</style>
<svg width="72" height="84" viewBox="0 0 72 84">
  <path d="M36 1L71 21V62L36 82 0 62V21z" fill="#8fd0f5" opacity=".85"/>
  <path d="M36 1L52 10C56 24 54 32 46 38L36 22 20 18C18 16 20 10 36 1z" fill="#d2e8f5" opacity=".9"/>
  <path d="M0 21L20 10C34 14 40 20 32 24L16 34 4 60 0 62z" fill="#b5dcf3" opacity=".8"/>
  <path d="M36 82L71 62V45C62 58 40 66 18 58L16 70z" fill="#79cbf5" opacity=".8"/>
  <path d="M36 20L56 31V53L36 64 20 53V31z" fill="none" stroke="#e4e6e8" stroke-width="4"/>
  <path d="M36 24L52 33 36 42 20 33z" fill="#bde2f7"/>
  <path d="M20 33L36 42V62L20 53z" fill="#a4d8f4"/>
  <path d="M52 33L36 42V62L52 53z" fill="#7cc6ec"/>
</svg>
<div class="big"><b>3D</b><span>世界网</span></div>
<div class="small">WWW.3DSJW.COM</div>`;
  }
}
customElements.define("nx-watermark", NxWatermark);

class NxWindow extends HTMLElement {
  connectedCallback() {
    this.attachShadow({mode: "open"}).innerHTML = `
<style>
:host{display:flex;flex-direction:column;position:relative;width:1322px;height:848px;overflow:hidden;background:#006088;font:12px/16px "Noto Sans","Noto Sans CJK SC",sans-serif;color:#222}
.inner{display:flex;flex-direction:column;flex:1;margin:0 4px;min-height:0}
.main{display:flex;height:728px;flex:none;background:#c4c4c4}
.gfx{display:flex;flex-direction:column;flex:1;margin-left:3px;min-width:0}
.status{height:22px;background:#fff;display:flex;align-items:center;padding-left:3px;font-size:11px;line-height:14px;color:#333;flex:none;border-top:1px solid #aaa;border-bottom:1px solid #bbb;box-sizing:border-box}
.pen{position:absolute;left:0;top:0;pointer-events:none}
</style>
<nx-titlebar></nx-titlebar>
<div class="inner">
  <nx-toolbar></nx-toolbar>
  <div class="main">
    <nx-left-panel></nx-left-panel>
    <div class="gfx">
      <nx-tab-strip></nx-tab-strip>
      <nx-viewport>
        <nx-ribbon-panel>
          <nx-ribbon-group w="80" label="结构" pad="13" lr="18" cr="8"><nx-icon name="wheelAdd"></nx-icon><nx-icon name="linkOrange" style="margin-left:7px"></nx-icon></nx-ribbon-group>
          <nx-ribbon-group w="260" label="构造" lr="16" cr="8" pad="13"><nx-icon name="plane"></nx-icon><nx-caret style="margin:0 10px 0 8px"></nx-caret><nx-icon name="sketch"></nx-icon><nx-icon name="curve" style="margin-left:8px"></nx-icon><nx-icon name="rect" style="margin-left:12px"></nx-icon><nx-icon name="circle" style="margin-left:8px"></nx-icon><nx-icon name="line" style="margin-left:9px"></nx-icon><nx-icon name="boxBolt" style="margin-left:7px"></nx-icon></nx-ribbon-group>
          <nx-ribbon-group w="212" label="基本" lr="18" cr="8" pad="13"><nx-icon name="yOrange"></nx-icon><nx-icon name="yWrench" style="margin-left:8px"></nx-icon><nx-icon name="yMid" style="margin-left:10px"></nx-icon><nx-icon name="lBracket" style="margin-left:9px"></nx-icon><nx-icon name="gusset" style="margin-left:9px"></nx-icon><nx-icon name="channel" style="margin-left:10px"></nx-icon></nx-ribbon-group>
          <nx-ribbon-group w="113" label="连接" lr="19" cr="8" pad="12"><nx-icon name="yBolt"></nx-icon><nx-icon name="nut" style="margin-left:9px"></nx-icon><nx-icon name="bolt" style="margin-left:9px"></nx-icon></nx-ribbon-group>
          <nx-ribbon-group w="80" label="可视报告" lr="16" cr="8" pad="11"><nx-icon name="report"></nx-icon><nx-icon name="eyeList" style="margin-left:9px"></nx-icon></nx-ribbon-group>
          <nx-ribbon-group w="48" label="设备" lr="18" cr="9" pad="12"><nx-icon name="device"></nx-icon></nx-ribbon-group>
          <nx-ribbon-group w="50" label="工具" lr="22" cr="12" pad="13" last><nx-icon name="molecule"></nx-icon></nx-ribbon-group>
        </nx-ribbon-panel>
      </nx-viewport>
    </div>
  </div>
  <div class="status">选择构件路径曲线</div>
</div>
<div style="height:7px;flex:none"></div>
<nx-dialog></nx-dialog>
<svg class="pen" width="1322" height="848"><path d="M398 442C392 441 388 441 386 440 383 425 384 408 398 399 420 388 470 388 505 386 525 384 545 382 552 392 562 402 568 415 566 425 563 438 550 446 538 449 510 455 470 452 440 454 420 454 400 450 385 446" fill="none" stroke="#e8232b" stroke-width="1.500"/></svg>
<nx-watermark></nx-watermark>`;
  }
}
customElements.define("nx-window", NxWindow);
</script>
</body>
</html>
